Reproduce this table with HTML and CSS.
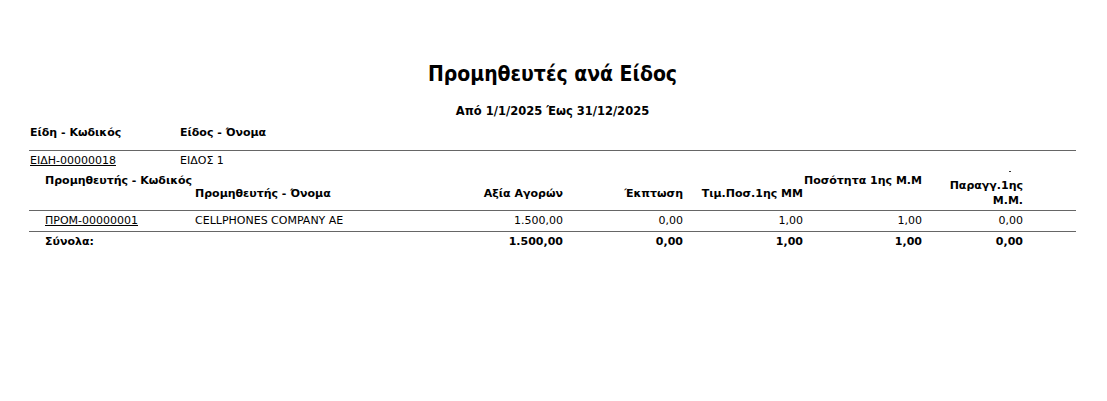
FILE: index.html
```html
<!DOCTYPE html>
<html lang="el">
<head>
<meta charset="utf-8">
<title>Προμηθευτές ανά Είδος</title>
<link rel="stylesheet" href="styles.css">
</head>
<body>
<div class="page">
  <h1 class="title">Προμηθευτές ανά Είδος</h1>
  <div class="subtitle">Από 1/1/2025 Έως 31/12/2025</div>

  <div class="item-head">
    <div class="ih-code">Είδη - Κωδικός</div>
    <div class="ih-name">Είδος - Όνομα</div>
  </div>

  <div class="item-row">
    <div class="ih-code"><span class="link">ΕΙΔΗ-00000018</span></div>
    <div class="ih-name">ΕΙΔΟΣ 1</div>
  </div>

  <div class="grid sup-head">
    <div class="c-code top">Προμηθευτής - Κωδικός</div>
    <div class="c-name bottom">Προμηθευτής - Όνομα</div>
    <div class="c-v1 bottom num">Αξία Αγορών</div>
    <div class="c-v2 bottom num">Έκπτωση</div>
    <div class="c-v3 bottom num">Τιμ.Ποσ.1ης ΜΜ</div>
    <div class="c-v4 top num">Ποσότητα 1ης Μ.Μ</div>
    <div class="c-v5 multi num">
      <span class="tick"></span>
      <span>Παραγγ.1ης</span>
      <span>Μ.Μ.</span>
    </div>
  </div>

  <div class="grid data-row">
    <div class="c-code"><span class="link">ΠΡΟΜ-00000001</span></div>
    <div class="c-name">CELLPHONES COMPANY AE</div>
    <div class="c-v1 num">1.500,00</div>
    <div class="c-v2 num">0,00</div>
    <div class="c-v3 num">1,00</div>
    <div class="c-v4 num">1,00</div>
    <div class="c-v5 num">0,00</div>
  </div>

  <div class="grid total-row">
    <div class="c-code">Σύνολα:</div>
    <div class="c-name"></div>
    <div class="c-v1 num">1.500,00</div>
    <div class="c-v2 num">0,00</div>
    <div class="c-v3 num">1,00</div>
    <div class="c-v4 num">1,00</div>
    <div class="c-v5 num">0,00</div>
  </div>
</div>
</body>
</html>
```

FILE: styles.css
```css
html, body {
  margin: 0;
  padding: 0;
  background: #ffffff;
}

body {
  font-family: "DejaVu Sans", Verdana, sans-serif;
  font-size: 11px;
  line-height: 13px;
  color: #000000;
}

.page {
  width: 1047px;
  padding: 62px 31px 0 29px;
}

.title {
  margin: 0;
  font-family: "DejaVu Sans Condensed", "DejaVu Sans", Tahoma, sans-serif;
  font-size: 21px;
  line-height: 25px;
  font-weight: bold;
  text-align: center;
}

.subtitle {
  margin-top: 18px;
  font-size: 11.5px;
  font-weight: bold;
  text-align: center;
}

.item-head {
  display: flex;
  margin-top: 8px;
  padding: 0 0 11px 1px;
  font-weight: bold;
}

.item-row {
  display: flex;
  border-top: 1px solid #666666;
  padding: 3px 0 0 1px;
}

.ih-code {
  width: 150px;
}

.ih-name {
  flex: 1;
}

.link {
  text-decoration: underline;
}

.grid {
  display: grid;
  grid-template-columns: 16px 150px 248px 120px 120px 120px 119px 101px 53px;
}

.c-code { grid-column: 2; }
.c-name { grid-column: 3; }
.c-v1 { grid-column: 4; }
.c-v2 { grid-column: 5; }
.c-v3 { grid-column: 6; }
.c-v4 { grid-column: 7; }
.c-v5 { grid-column: 8; }

.num {
  text-align: right;
}

.sup-head {
  height: 43px;
  font-weight: bold;
}

.sup-head > div {
  white-space: nowrap;
}

.sup-head .top {
  align-self: start;
  padding-top: 7px;
}

.sup-head .bottom {
  align-self: end;
  padding-bottom: 10px;
}

.sup-head .multi {
  align-self: end;
  padding-bottom: 2px;
  display: flex;
  flex-direction: column;
  align-items: flex-end;
  line-height: 15px;
}

.tick {
  width: 2px;
  height: 1px;
  background: #333333;
  margin: 0 12px 6px 0;
}

.data-row {
  border-top: 1px solid #666666;
  padding: 3px 0 4px;
}

.total-row {
  border-top: 1px solid #666666;
  padding-top: 3px;
  font-weight: bold;
}
```
